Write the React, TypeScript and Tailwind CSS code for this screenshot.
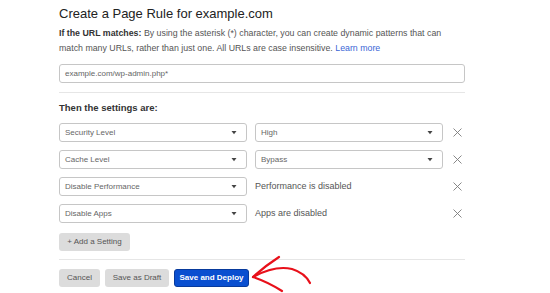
import React from "react";

function Caret() {
  return (
    <svg width="6" height="4" viewBox="0 0 6 4" className="shrink-0">
      <path d="M0.5 0 L5.5 0 L3 3.2 Z" fill="#444" />
    </svg>
  );
}

function XIcon() {
  return (
    <svg width="9" height="9" viewBox="0 0 9 9">
      <path d="M0.5 0.5 L8.5 8.5 M8.5 0.5 L0.5 8.5" stroke="#7a7a7a" strokeWidth="0.9" />
    </svg>
  );
}

function Select({ label }: { label: string }) {
  return (
    <div className="w-[188px] h-[19px] border border-[#c6c6c6] rounded-[3px] bg-white flex items-center justify-between pl-[5px] pr-[9px] text-[8px] text-[#666]">
      <span>{label}</span>
      <Caret />
    </div>
  );
}

function Row({ left, right, select }: { left: string; right: string; select: boolean }) {
  return (
    <div className="flex items-center h-[19px]">
      <Select label={left} />
      <div className="w-[8px] shrink-0" />
      {select ? (
        <Select label={right} />
      ) : (
        <div className="w-[188px] text-[9px] text-[#555]">{right}</div>
      )}
      <div className="w-[10px] shrink-0" />
      <XIcon />
    </div>
  );
}

export default function App() {
  return (
    <div
      className="w-[550px] h-[293px] bg-white overflow-hidden relative"
      style={{ fontFamily: "'Liberation Sans', Arial, sans-serif" }}
    >
      <div className="pl-[59px] w-[465px] pt-[6px]">
        <h1 className="text-[13px] leading-[16px] text-[#222] font-normal">
          Create a Page Rule for example.com
        </h1>
        <p className="mt-[4px] text-[8.8px] leading-[15px] text-[#555]">
          <span className="font-bold text-[#333]">If the URL matches:</span> By using the asterisk (*) character, you can create dynamic patterns that can match many URLs, rather than just one. All URLs are case insensitive.{" "}
          <span className="text-[#3b66d6]">Learn more</span>
        </p>
        <div className="mt-[8px] h-[19px] border border-[#c6c6c6] rounded-[3px] flex items-center pl-[5px] text-[8px] text-[#666]">
          example.com/wp-admin.php*
        </div>
        <div className="mt-[9px] h-px bg-[#e6e6e6]" />
        <div className="mt-[9px] text-[9.5px] leading-[12px] font-bold text-[#333]">
          Then the settings are:
        </div>
        <div className="mt-[9px] flex flex-col gap-[8px]">
          <Row left="Security Level" right="High" select />
          <Row left="Cache Level" right="Bypass" select />
          <Row left="Disable Performance" right="Performance is disabled" select={false} />
          <Row left="Disable Apps" right="Apps are disabled" select={false} />
        </div>
        <div className="mt-[10px] w-[71px] h-[18px] rounded-[3px] bg-[#dcdcdc] flex items-center justify-center text-[8px] text-[#555]">
          + Add a Setting
        </div>
        <div className="mt-[8px] h-px bg-[#e6e6e6]" />
        <div className="mt-[9px] flex gap-[5px]">
          <div className="w-[41px] h-[18px] rounded-[3px] bg-[#dcdcdc] flex items-center justify-center text-[8px] text-[#555]">
            Cancel
          </div>
          <div className="w-[64px] h-[18px] rounded-[3px] bg-[#dcdcdc] flex items-center justify-center text-[8px] text-[#555]">
            Save as Draft
          </div>
          <div className="w-[75px] h-[18px] rounded-[3px] bg-[#0a4fd0] border border-[#083a9c] flex items-center justify-center text-[8px] font-bold text-white">
            Save and Deploy
          </div>
        </div>
      </div>
      <svg className="absolute left-0 top-0" width="550" height="293" viewBox="0 0 550 293">
        <path
          d="M253 277 Q275 265 292 269 Q305 273 310 283"
          fill="none"
          stroke="#e8101a"
          strokeWidth="2.2"
          strokeLinecap="round"
        />
        <path
          d="M279 257 Q265 266 253 277 Q268 282 282 291"
          fill="none"
          stroke="#e8101a"
          strokeWidth="2.2"
          strokeLinecap="round"
          strokeLinejoin="round"
        />
      </svg>
    </div>
  );
}
